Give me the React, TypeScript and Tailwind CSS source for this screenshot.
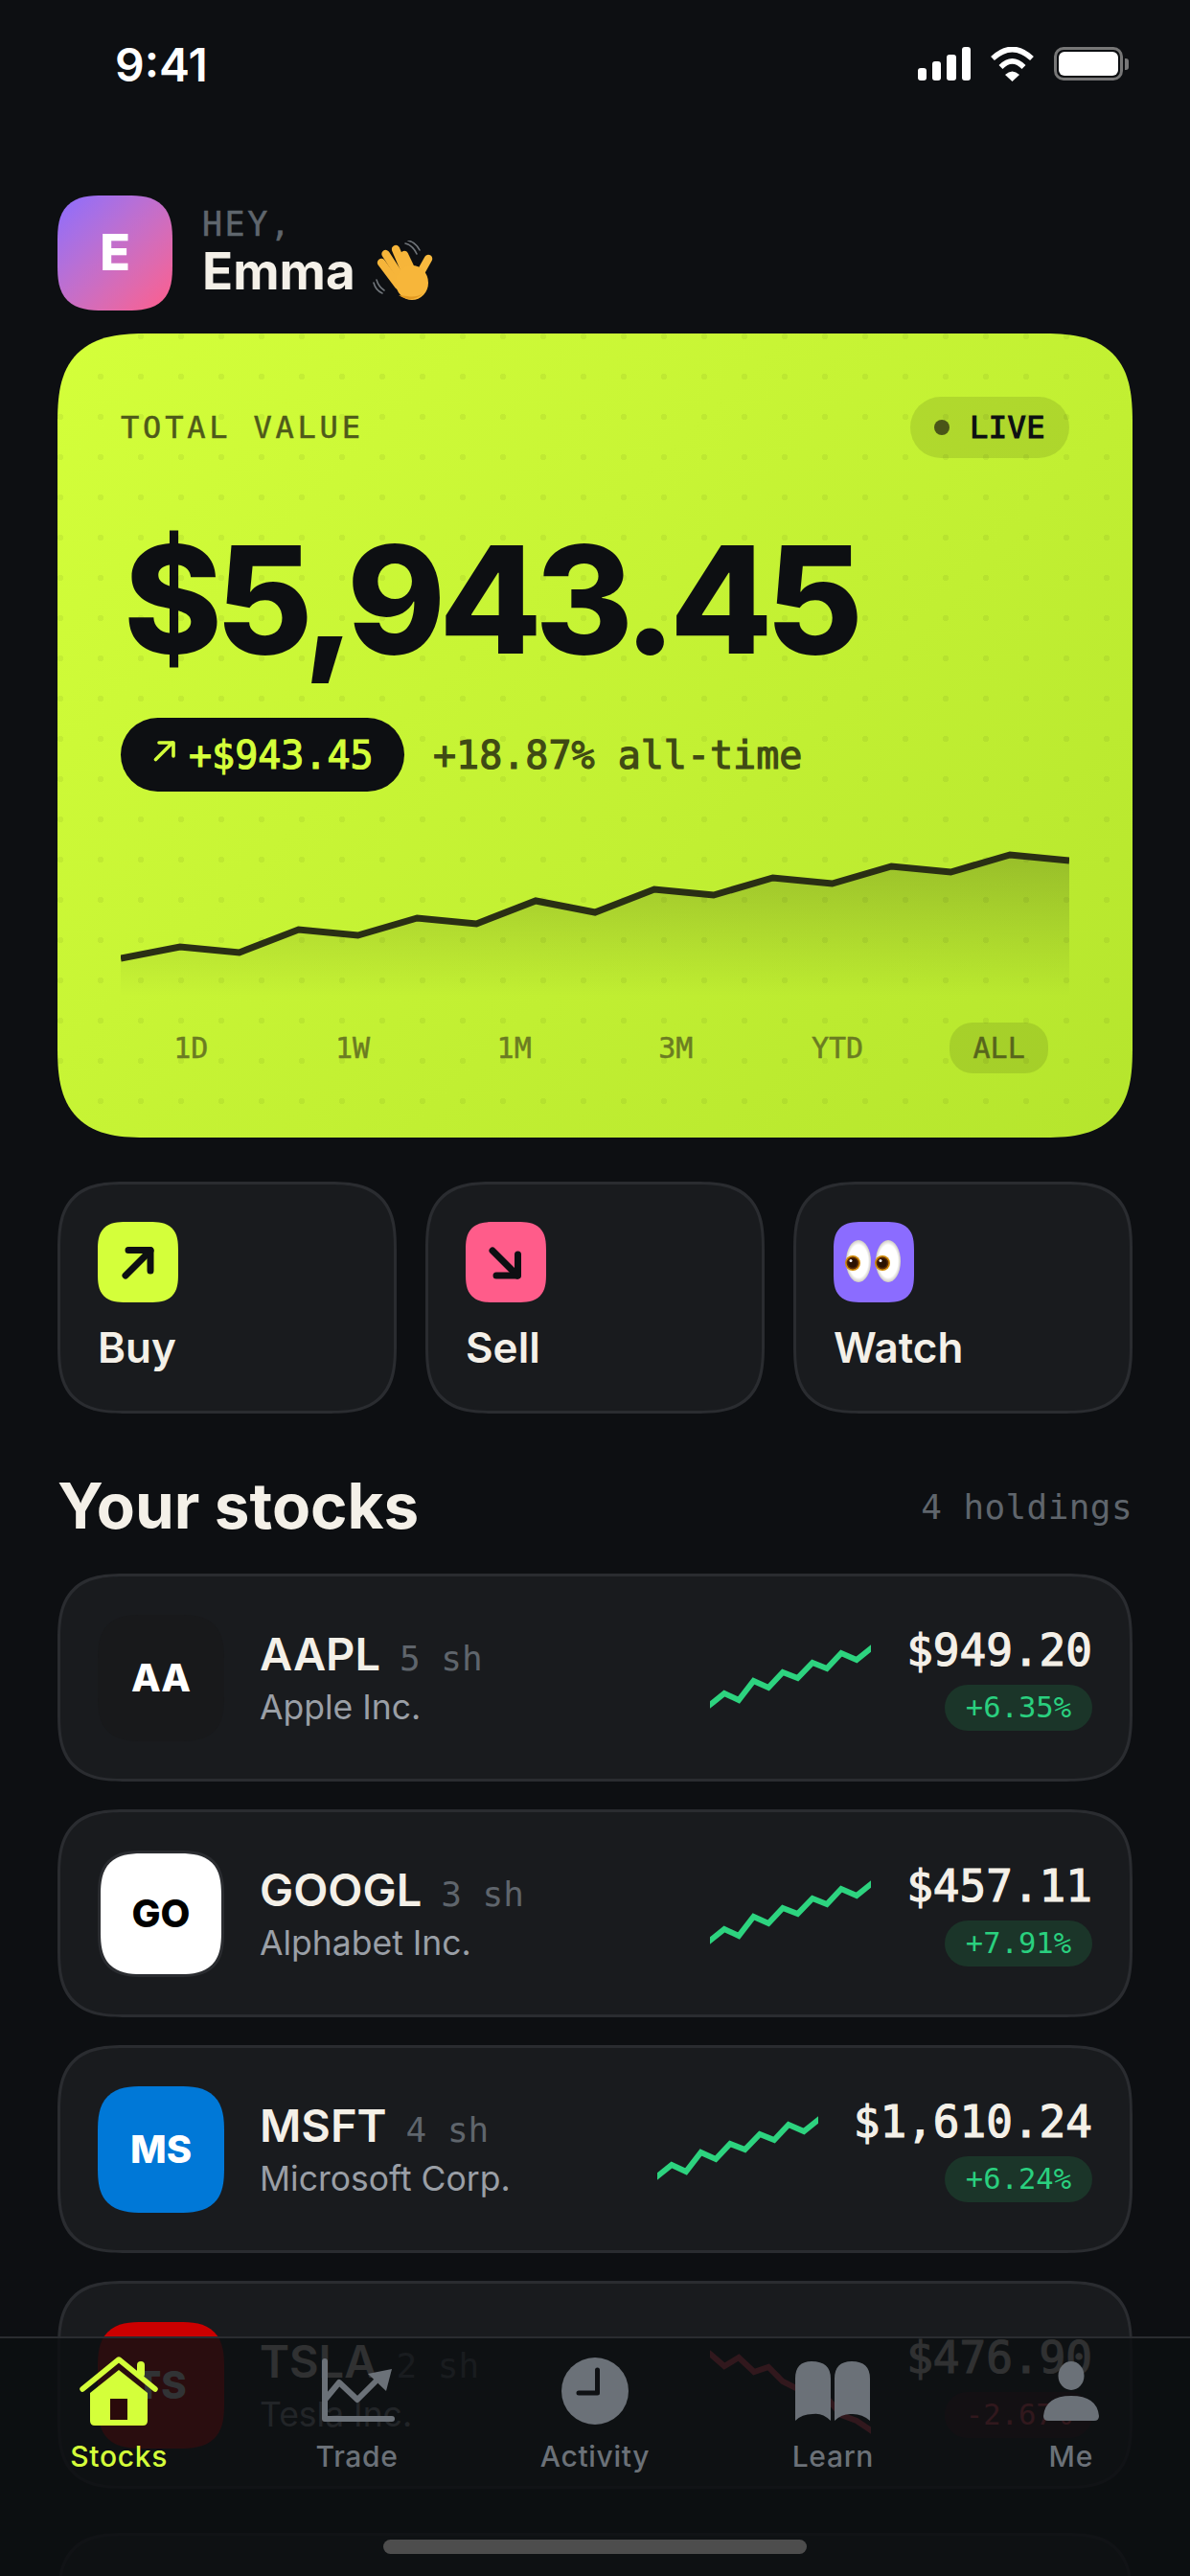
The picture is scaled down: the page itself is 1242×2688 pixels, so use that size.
import React from "react";

const SPARK_UP = "-8,67 0,61 15,49 30,56 45.5,36 61,43 76,27 91.5,33 107,17 122,23 137,7 153,14 168,2 176,-4";
const SPARK_DOWN = "-8,-6 0,0 15,13 30,4 46,19 61,14 76,29 92,37 107,48 122,46 137,64 153,70 168,80 176,86";

type Row = {
  tick: string; sh: string; name: string; price: string; pct: string;
  logo: string; logoText: string; logoBox: string; down?: boolean;
};

const rows: Row[] = [
  { tick: "AAPL", sh: "5 sh", name: "Apple Inc.", price: "$949.20", pct: "+6.35%", logo: "AA", logoText: "text-white", logoBox: "bg-[#18191b]" },
  { tick: "GOOGL", sh: "3 sh", name: "Alphabet Inc.", price: "$457.11", pct: "+7.91%", logo: "GO", logoText: "text-black", logoBox: "bg-white border-[3px] border-[#2a2c30]" },
  { tick: "MSFT", sh: "4 sh", name: "Microsoft Corp.", price: "$1,610.24", pct: "+6.24%", logo: "MS", logoText: "text-white", logoBox: "bg-[#0078d7]" },
  { tick: "TSLA", sh: "2 sh", name: "Tesla Inc.", price: "$476.90", pct: "-2.67%", logo: "TS", logoText: "text-white", logoBox: "bg-[#cc0000]", down: true },
];

const SANS = "font-['Inter','Liberation_Sans',sans-serif]";
const MONO = "font-['DejaVu_Sans_Mono','Liberation_Mono',monospace]";
const SQ = "[corner-shape:superellipse(1.5)]";
const MED = "[-webkit-text-stroke:1.2px_currentColor]";
const LIGHT = "[-webkit-text-stroke:0.5px_currentColor]";

function Wave() {
  return (
    <svg width="64" height="64" viewBox="0 0 64 64" fill="none">
      <g stroke="#f6b53a" strokeWidth="8.4" strokeLinecap="round">
        <path d="M27 47 L9 23" />
        <path d="M31 41 L13.5 14" />
        <path d="M36 37 L24 9" />
        <path d="M43 36 L33 15" />
      </g>
      <path d="M44 44 L58 19" stroke="#f8b93e" strokeWidth="8.5" strokeLinecap="round" />
      <ellipse cx="41" cy="44" rx="17" ry="18" fill="#f7b63a" />
      <path d="M27 57 Q40 66 53 55 Q45 60 36 58 Z" fill="#e39a22" />
      <g stroke="#70757a" strokeWidth="1.6" strokeLinecap="round">
        <path d="M34 3 Q42 5 46 14" />
        <path d="M37 0 Q45 2 49 10" />
        <path d="M1 44 Q3 52 10 55" />
        <path d="M4 41 Q6 48 12 52" />
      </g>
    </svg>
  );
}

function Eye({ x, ix }: { x: number; ix: number }) {
  return (
    <g>
      <ellipse cx={x} cy="41" rx="13" ry="22" fill="url(#eyeW)" />
      <circle cx={ix} cy="43" r="8" fill="#d08c08" />
      <circle cx={ix} cy="43" r="6.4" fill="#5a2a04" />
      <circle cx={ix} cy="43" r="4.8" fill="#2a1202" />
      <circle cx={ix - 2} cy="40.5" r="1.5" fill="#fff" />
    </g>
  );
}

function Eyes() {
  return (
    <svg width="84" height="84" viewBox="0 0 84 84">
      <defs>
        <radialGradient id="eyeW" cx="50%" cy="50%" r="55%">
          <stop offset="70%" stopColor="#ffffff" />
          <stop offset="100%" stopColor="#b9b4a8" />
        </radialGradient>
      </defs>
      <Eye x={26} ix={20} />
      <Eye x={57} ix={51} />
    </svg>
  );
}

function StatusIcons() {
  return (
    <div className="flex items-start gap-[20px]">
      <div className="flex items-end gap-[6px] h-[35px]">
        <div className="w-[9px] h-[13px] rounded-[3px] bg-white" />
        <div className="w-[9px] h-[20px] rounded-[3px] bg-white" />
        <div className="w-[10px] h-[27px] rounded-[3px] bg-white" />
        <div className="w-[9px] h-[35px] rounded-[3px] bg-white" />
      </div>
      <svg width="47" height="36" viewBox="0 0 47 36" fill="none">
        <path d="M3 12 Q23.5 -7 44 12" stroke="#fff" strokeWidth="5.6" />
        <path d="M11.5 21 Q23.5 9 35.5 21" stroke="#fff" strokeWidth="5.6" />
        <path d="M16 29 Q23.5 22 31 29 L23.5 36 Z" fill="#fff" />
      </svg>
      <div className="flex items-center gap-[2px]">
        <div className="w-[72px] h-[35px] rounded-[10px] border-[3px] border-[#777777] p-[2px]">
          <div className="w-full h-full rounded-[6px] bg-white" />
        </div>
        <div className="w-[4px] h-[12px] rounded-r-[3px] bg-[#777777]" />
      </div>
    </div>
  );
}

function ArrowUp() {
  return (
    <svg width="84" height="84" viewBox="0 0 84 84" fill="none" stroke="#0d0f12" strokeWidth="7" strokeLinecap="round" strokeLinejoin="round">
      <path d="M29 56 L55 30" />
      <path d="M32 29.5 H55 V51" />
    </svg>
  );
}

function ArrowDown() {
  return (
    <svg width="84" height="84" viewBox="0 0 84 84" fill="none" stroke="#0d0f12" strokeWidth="7" strokeLinecap="round" strokeLinejoin="round">
      <path d="M28 30 L54 56" />
      <path d="M54.5 34 V56 H32" />
    </svg>
  );
}

function HomeIcon() {
  return (
    <svg width="84" height="84" viewBox="0 0 84 84" fill="none">
      <path d="M4 40 L42 9 L80 40" stroke="#d4ff3a" strokeWidth="5.5" strokeLinecap="round" strokeLinejoin="round" />
      <path d="M65 15 V24" stroke="#d4ff3a" strokeWidth="8" strokeLinecap="round" />
      <path d="M42 20 L72 44 V73 Q72 78 67 78 H17 Q12 78 12 73 V44 Z" fill="#d4ff3a" />
      <rect x="33" y="50" width="18" height="22" fill="#2a0a0b" />
    </svg>
  );
}

function TradeIcon() {
  return (
    <svg width="84" height="84" viewBox="0 0 84 84" fill="none">
      <path d="M8 11 V71 H78" stroke="#6b7178" strokeWidth="6" strokeLinecap="round" strokeLinejoin="round" />
      <path d="M9 50 L23 33 L42 51 L60 33" stroke="#6b7178" strokeWidth="6" strokeLinecap="round" strokeLinejoin="round" />
      <path d="M78 19 L53 24 L72 42 Z" fill="#6b7178" />
    </svg>
  );
}

function ClockIcon() {
  return (
    <svg width="84" height="84" viewBox="0 0 84 84" fill="none">
      <circle cx="42" cy="42" r="35" fill="#6b7178" />
      <path d="M44.5 20 V44 H25" stroke="#0f1114" strokeWidth="5" strokeLinecap="round" strokeLinejoin="round" />
    </svg>
  );
}

function BookIcon() {
  return (
    <svg width="84" height="84" viewBox="0 0 84 84" fill="none">
      <path d="M3 73 V29 Q3 11 20 11 Q40 11 40 29 V73 Q31 64 21 66 Q10 66 3 73 Z" fill="#6b7178" />
      <path d="M44 73 V29 Q44 11 62 11 Q81 11 81 29 V73 Q73 66 63 66 Q52 65 44 73 Z" fill="#6b7178" />
    </svg>
  );
}

function PersonIcon() {
  return (
    <svg width="84" height="84" viewBox="0 0 84 84" fill="none">
      <ellipse cx="42" cy="26" rx="13.5" ry="15" fill="#6b7178" />
      <path d="M13 68 Q15 47 42 47 Q69 47 71 68 Q71 73 66 73 H18 Q13 73 13 68 Z" fill="#6b7178" />
    </svg>
  );
}

function StockRow({ r }: { r: Row }) {
  return (
    <div className={`h-[217px] px-[39px] flex items-center rounded-[72px] ${SQ} border-[3px] border-[#2a2c30] bg-[#191b1e]`}>
      <div className={`w-[132px] h-[132px] shrink-0 flex items-center justify-center rounded-[48px] ${SQ} ${r.logoBox}`}>
        <span className={`${SANS} text-[40px] font-extrabold ${r.logoText}`}>{r.logo}</span>
      </div>
      <div className="ml-[37px] flex-1 flex flex-col gap-[7px] mt-[2px]">
        <div className="flex items-baseline gap-[20px] h-[54px] leading-[54px]">
          <span className={`${SANS} text-[47px] font-semibold text-[#f4f0e8]`}>{r.tick}</span>
          <span className={`${MONO} text-[36px] text-[#5f656c]`}>{r.sh}</span>
        </div>
        <div className={`${SANS} text-[35.5px] leading-[44px] text-[#9a9fa6]`}>{r.name}</div>
      </div>
      <svg width="168" height="92" viewBox="0 -6 168 92" fill="none" className="shrink-0 mr-[37px] mt-[15px]">
        <polyline points={r.down ? SPARK_DOWN : SPARK_UP} stroke={r.down ? "#ff4d5e" : "#2dd37f"} strokeWidth="6" />
      </svg>
      <div className="flex flex-col items-end">
        <div className={`${MONO} ${MED} text-[46px] leading-[52px] text-[#f4f0e8]`}>{r.price}</div>
        <div className={`mt-[10px] h-[48px] px-[22px] rounded-full flex items-center ${MONO} text-[30.5px] ${r.down ? "bg-[#3a1a1f] text-[#ff4d5e]" : "bg-[#1b3529] text-[#2ad07f]"}`}>{r.pct}</div>
      </div>
    </div>
  );
}

const TABS = ["1D", "1W", "1M", "3M", "YTD", "ALL"];
const NAV = [
  { label: "Stocks", icon: <HomeIcon />, active: true },
  { label: "Trade", icon: <TradeIcon /> },
  { label: "Activity", icon: <ClockIcon /> },
  { label: "Learn", icon: <BookIcon /> },
  { label: "Me", icon: <PersonIcon /> },
];

const CHART = [120, 108, 114, 90, 96, 78, 84, 60, 72, 48, 54, 36, 42, 24, 30, 12, 18];
const linePts = CHART.map((y, i) => `${i * 61.875},${y}`).join(" ");

export default function App() {
  return (
    <div className={`relative w-full h-[2688px] overflow-hidden bg-[#0d0f12] ${SANS}`}>
      <div className="h-[134px] pl-[120px] pr-[64px] flex items-center justify-between">
        <span className="text-[48px] font-semibold text-white leading-none mt-[2px]">9:41</span>
        <StatusIcons />
      </div>

      <div className="px-[60px] pt-[70px]">
        <div className="flex items-center gap-[31px] h-[120px]">
          <div className={`w-[120px] h-[120px] flex items-center justify-center rounded-[48px] ${SQ} bg-gradient-to-br from-[#8b6cff] to-[#ff5c8a]`}>
            <span className="text-[52px] font-extrabold text-white">E</span>
          </div>
          <div className="flex flex-col">
            <span className={`${MONO} ${LIGHT} text-[35px] leading-[40px] tracking-[2.5px] text-[#5f666d]`}>HEY,</span>
            <div className="flex items-center gap-[18px] h-[62px] -mt-[2px]">
              <span className="text-[53px] leading-[62px] font-bold text-[#f4f0e8]">Emma</span>
              <Wave />
            </div>
          </div>
        </div>

        <div className={`mt-[24px] px-[66px] pt-[66px] pb-[67px] rounded-[96px] ${SQ} bg-[radial-gradient(circle_at_3px_3px,rgba(0,0,0,0.05)_3px,transparent_3.5px),linear-gradient(135deg,#d4ff3a,#b5e52d)] bg-[size:42px_42px,100%_100%]`}>
          <div className="flex items-center justify-between h-[64px]">
            <span className={`${MONO} ${LIGHT} text-[32px] tracking-[3.8px] text-[#4e5a1a]`}>TOTAL VALUE</span>
            <div className="h-[64px] w-[166px] rounded-full bg-black/10 flex items-center pl-[25px] gap-[21px]">
              <div className="w-[16px] h-[16px] rounded-full bg-[#4a5518]" />
              <span className={`${MONO} ${MED} text-[32px] text-[#0d0f12] tracking-[0.5px]`}>LIVE</span>
            </div>
          </div>

          <div className="mt-[70px] ml-[3px] text-[156px] leading-[156px] font-extrabold text-[#0d0f12] tracking-[-7px] whitespace-nowrap">$5,943.45</div>

          <div className="mt-[45px] flex items-center">
            <div className="h-[77px] w-[296px] pl-[34px] rounded-full bg-[#0d0f12] flex items-center gap-[13px]">
              <svg width="24" height="24" viewBox="0 0 24 24" fill="none" stroke="#d4ff3a" strokeWidth="3.6" strokeLinecap="round" className="mb-[9px] shrink-0">
                <path d="M2.5 21.5 L20 4" />
                <path d="M6 4 H21 V18" strokeLinejoin="round" />
              </svg>
              <span className={`${MONO} ${MED} text-[40px] text-[#d4ff3a]`}>+$943.45</span>
            </div>
            <span className={`ml-[30px] ${MONO} ${MED} text-[40px] text-[#3f4a14]`}>+18.87% all-time</span>
          </div>

          <svg width="990" height="160" viewBox="0 0 990 160" fill="none" className="mt-[54px] block">
            <defs>
              <linearGradient id="area" x1="0" y1="0" x2="0" y2="1">
                <stop offset="0%" stopColor="#0d0f12" stopOpacity="0.2" />
                <stop offset="100%" stopColor="#0d0f12" stopOpacity="0" />
              </linearGradient>
            </defs>
            <polygon points={`0,160 ${linePts} 990,160`} fill="url(#area)" />
            <polyline points={linePts} stroke="#2a2f14" strokeWidth="7" />
          </svg>

          <div className="mt-[27px] -mx-[11px] grid grid-cols-6 h-[53px]">
            {TABS.map((t) => (
              <div key={t} className="flex justify-center">
                <div className={`h-[53px] w-[103px] rounded-[24px] flex items-center justify-center ${MONO} ${LIGHT} text-[30px] ${t === "ALL" ? "bg-black/10 text-[#57651c]" : "text-[#6b7c22]"}`}>{t}</div>
              </div>
            ))}
          </div>
        </div>

        <div className="mt-[46px] grid grid-cols-3 gap-[30px]">
          {[
            { l: "Buy", box: "bg-[#d4ff3a]", i: <ArrowUp /> },
            { l: "Sell", box: "bg-[#ff5c8a]", i: <ArrowDown /> },
            { l: "Watch", box: "bg-[#8b6cff]", i: <Eyes /> },
          ].map((b) => (
            <div key={b.l} className={`h-[242px] pl-[39px] pt-[39px] rounded-[72px] ${SQ} border-[3px] border-[#2a2c30] bg-[#191b1e]`}>
              <div className={`w-[84px] h-[84px] rounded-[30px] ${SQ} ${b.box}`}>{b.i}</div>
              <div className="mt-[20px] text-[44px] leading-[54px] font-semibold text-[#f4f0e8]">{b.l}</div>
            </div>
          ))}
        </div>

        <div className="mt-[57px] flex items-center justify-between h-[80px]">
          <span className="text-[65.5px] leading-[80px] font-bold text-[#f4f0e8]">Your stocks</span>
          <span className={`${MONO} text-[36px] tracking-[0.4px] text-[#5f656c] mt-[2px]`}>4 holdings</span>
        </div>

        <div className="mt-[30px] flex flex-col gap-[29px]">
          {rows.map((r) => (
            <StockRow key={r.tick} r={r} />
          ))}
          <div className={`mt-[17px] h-[217px] rounded-[72px] ${SQ} border-[3px] border-[#2a2c30] bg-[#191b1e]`} />
        </div>
      </div>

      <div className="absolute left-0 right-0 top-[2438px] bottom-0 border-t-[2px] border-[#2a2c30] bg-[#0d0f12]/85">
        <div className="grid grid-cols-5 pt-[13px]">
          {NAV.map((n) => (
            <div key={n.label} className="flex flex-col items-center">
              {n.icon}
              <span className={`mt-[6px] text-[30px] leading-[40px] font-medium tracking-[0.7px] ${n.active ? "text-[#d4ff3a]" : "text-[#6b7178]"}`}>{n.label}</span>
            </div>
          ))}
        </div>
        <div className="absolute left-[400px] top-[210px] w-[442px] h-[15px] rounded-full bg-[#4d4d4d]" />
      </div>
    </div>
  );
}
